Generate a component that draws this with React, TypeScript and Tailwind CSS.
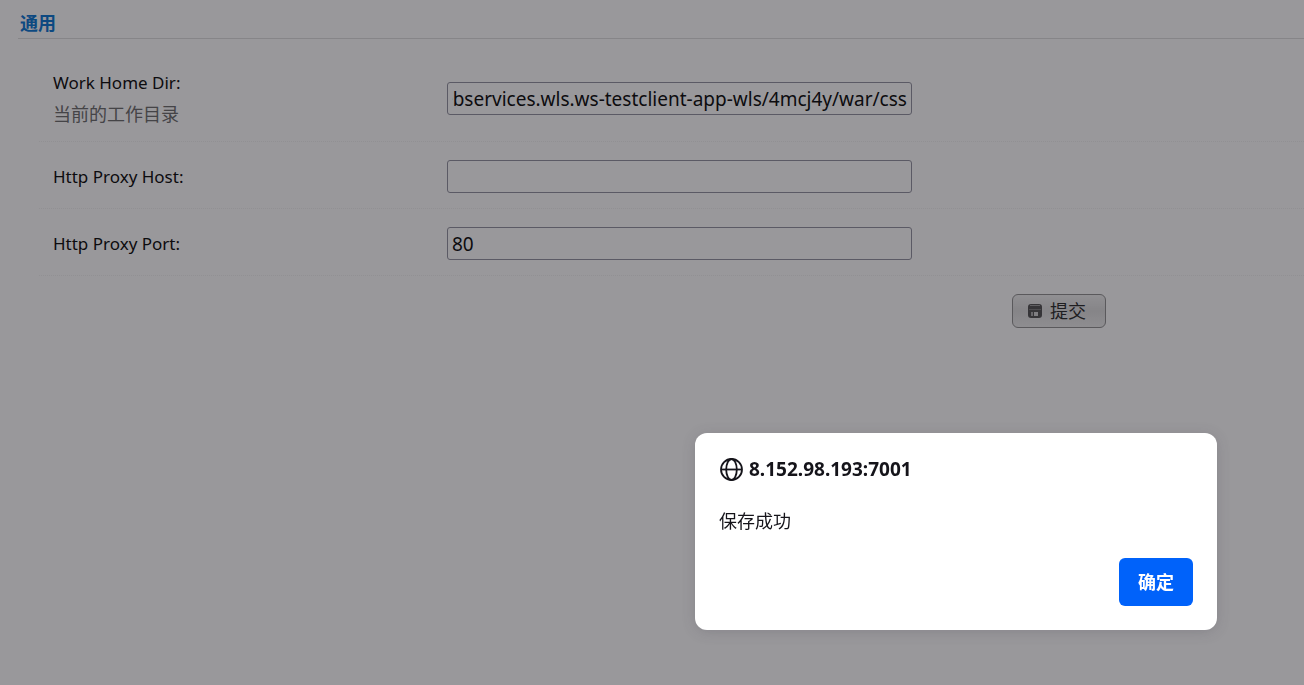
import { useEffect, useRef, useState } from 'react';

const SettingsRow = ({ id, label, hint, value }: { id: string; label: string; hint?: string; value: string }) => {
  const inputRef = useRef<HTMLInputElement>(null);
  const [text, setText] = useState(value);

  // long paths are shown from their end
  useEffect(() => {
    if (inputRef.current) {
      inputRef.current.scrollLeft = inputRef.current.scrollWidth;
    }
  }, []);

  return (
    <div className="flex items-center pt-[18px] pb-[15px] pl-[14px] border-b border-dotted border-[#f0f0f0]">
      <div className="flex flex-col gap-[7px] w-[394px] shrink-0 leading-6">
        <label htmlFor={id} className="text-black text-[17px] leading-6">{label}</label>
        {hint && <p className="text-[#666666] text-lg leading-6">{hint}</p>}
      </div>
      <input
        id={id}
        ref={inputRef}
        type="text"
        value={text}
        onChange={(e) => setText(e.target.value)}
        className="w-[465px] h-[33px] px-1 border border-[#8f8f9d] rounded-[3px] bg-white text-black text-[19px]"
      />
    </div>
  );
};

const SaveIcon = () => (
  <svg width="14" height="14" viewBox="0 0 14 14" aria-hidden="true">
    <rect x="0" y="0" width="14" height="14" rx="3" fill="#4c4c4c" />
    <rect x="2" y="1" width="10" height="1" fill="#999999" />
    <rect x="1" y="5" width="12" height="1" fill="#777777" />
    <rect x="3" y="8" width="2" height="4" fill="#a8a8a8" />
    <rect x="6" y="8" width="4" height="4" fill="#d0d0d0" />
  </svg>
);

const GlobeIcon = () => (
  <svg width="24" height="24" viewBox="-1 -1 24 24" fill="none" stroke="#15141a" strokeWidth="1.8" aria-hidden="true">
    <circle cx="11.5" cy="11.5" r="10.5" />
    <ellipse cx="11.5" cy="11.5" rx="5.3" ry="10.5" />
    <path d="M1 11.5h21" />
  </svg>
);

export default function App() {
  const [isAlertOpen, setIsAlertOpen] = useState(true);

  return (
    <div className="min-h-screen bg-white font-['Noto_Sans','Noto_Sans_CJK_SC',sans-serif]">
      <main className="pt-[9px] pl-[18px]">
        <h1 className="pl-[2px] pb-[1px] border-b border-[#dddddd] text-[#0070d0] text-lg leading-7 font-bold">通用</h1>
        <form
          onSubmit={(e) => {
            e.preventDefault();
            setIsAlertOpen(true);
          }}
          className="pt-[14px] pl-[21px]"
        >
          <SettingsRow id="workDir" label="Work Home Dir:" hint="当前的工作目录" value="webservices.wls.ws-testclient-app-wls/4mcj4y/war/css" />
          <SettingsRow id="proxyHost" label="Http Proxy Host:" value="" />
          <SettingsRow id="proxyPort" label="Http Proxy Port:" value="80" />
          <div className="flex justify-end pt-[18px] pr-[198px]">
            <button
              type="submit"
              className="flex items-center gap-2 w-[94px] h-[34px] pl-[15px] border border-[#8c8c8c] rounded-md bg-linear-to-b from-[#f0f0f0] via-[#dcdcdc] to-[#ececec] text-[#222222] text-lg"
            >
              <SaveIcon />
              提交
            </button>
          </div>
        </form>
      </main>
      {isAlertOpen && (
        <div className="fixed inset-0 flex items-end justify-end pr-[87px] pb-[55px] bg-[#1c1b22]/45">
          <div
            role="alertdialog"
            aria-labelledby="alertTitle"
            aria-describedby="alertText"
            className="flex flex-col w-[522px] p-6 rounded-xl bg-white text-[#15141a] shadow-[0_2px_14px_rgba(58,57,68,0.2)]"
          >
            <div className="flex items-center gap-[6px]">
              <GlobeIcon />
              <h2 id="alertTitle" className="text-[19px] leading-6 font-bold">8.152.98.193:7001</h2>
            </div>
            <p id="alertText" className="pt-7 pb-[25px] text-lg leading-6">保存成功</p>
            <button
              type="button"
              onClick={() => setIsAlertOpen(false)}
              className="self-end w-[74px] h-12 rounded-md bg-[#0062fa] text-white text-lg font-bold"
            >
              确定
            </button>
          </div>
        </div>
      )}
    </div>
  );
}
